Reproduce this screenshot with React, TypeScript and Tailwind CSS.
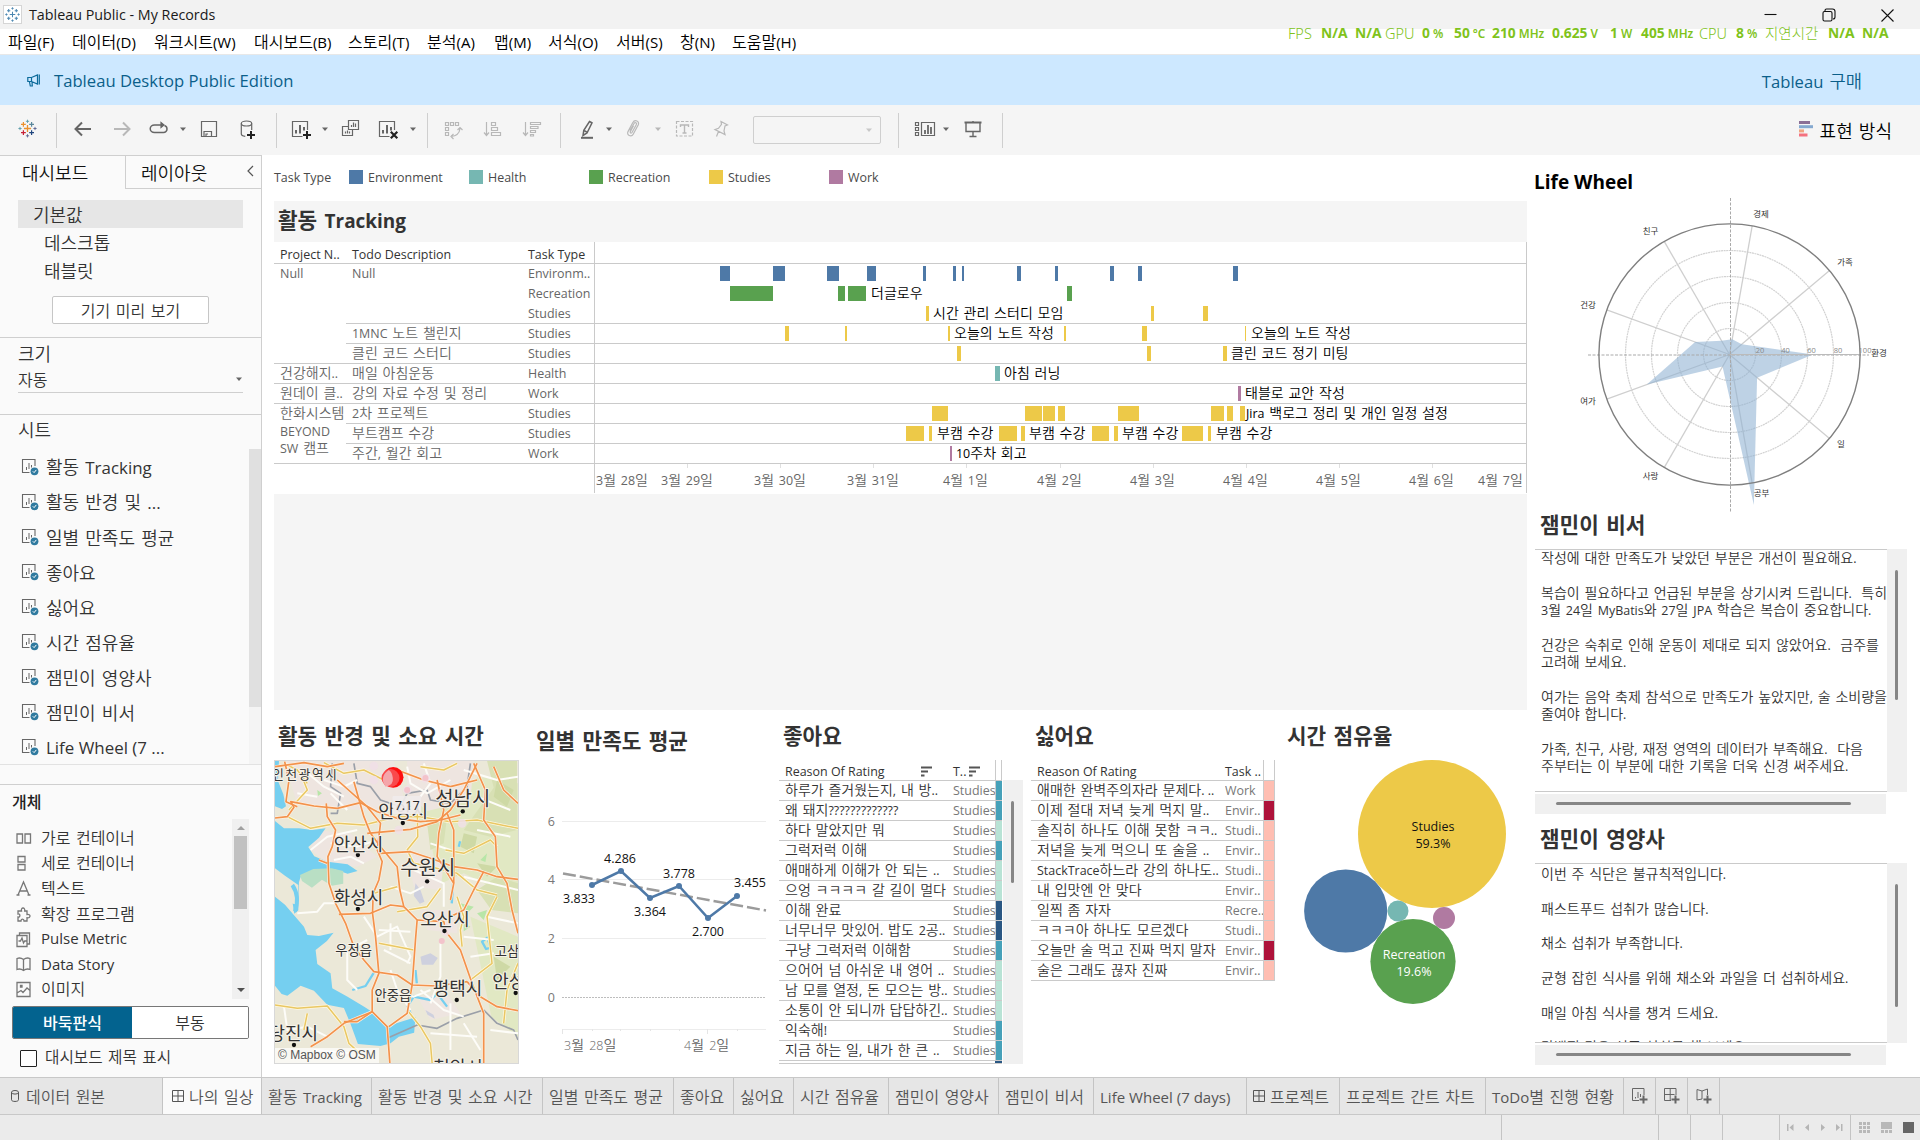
import React from 'react';

const HANGUL = '[font-family:"Noto_Sans_CJK_KR",sans-serif]';
const LATIN = '[font-family:"Open_Sans","Noto_Sans",sans-serif] ';

/* Mixed-script text: Hangul runs at full size, Latin runs slightly smaller. */
function K({ t, c = '', big, b }: { t: string; c?: string; big?: boolean; b?: boolean }) {
  const runs = t.match(/[\u1100-\u11ff\u3130-\u318f\uac00-\ud7a3\s]+|[^\u1100-\u11ff\u3130-\u318f\uac00-\ud7a3\s]+(?:\s+[^\u1100-\u11ff\u3130-\u318f\uac00-\ud7a3\s]+)*/g) || [];
  return (
    <span className={'whitespace-pre ' + HANGUL + ' ' + c}>
      {runs.map((r, i) =>
        /[\u1100-\u11ff\u3130-\u318f\uac00-\ud7a3]/.test(r) || !r.trim() ? (
          <span key={i} className={'[word-spacing:0.12em] ' + (b ? '' : 'font-[350]')}>{r}</span>
        ) : (
          <span key={i} className={LATIN + (big ? 'text-[0.94em]' : 'text-[0.89em]')}>{r}</span>
        ),
      )}
    </span>
  );
}

const BLUE = '#4e79a7';
const TEAL = '#76b7b2';
const GREEN = '#59a14f';
const YELLOW = '#edc948';
const PURPLE = '#b07aa1';

/* ---------- toolbar ---------- */

function Ic({ m, color = '#666', children }: { m: string; color?: string; children: React.ReactNode }) {
  return (
    <svg className={'h-[22px] w-[22px] shrink-0 ' + m} viewBox="0 0 22 22" fill="none" stroke={color} strokeWidth="1.2">
      {children}
    </svg>
  );
}
const Caret = ({ m, color = '#666' }: { m: string; color?: string }) => (
  <svg className={'h-[4px] w-[6px] shrink-0 ' + m} viewBox="0 0 6 4" fill={color}><path d="M0 0.5h6L3 4z" /></svg>
);
const Div = ({ m }: { m: string }) => <div className={'h-[35px] w-px shrink-0 bg-[#cfcfcf] ' + m} />;

const plus = (x: number, y: number, r: number) => `M${x - r} ${y}h${2 * r}M${x} ${y - r}v${2 * r}`;

function TableauMark() {
  return (
    <>
      <path d={plus(10.5, 10.5, 3.6)} stroke="#eb912c" strokeWidth="1.3" />
      <path d={plus(6.4, 6.4, 2.4)} stroke="#eb912c" strokeWidth="1.2" />
      <path d={plus(14.6, 6.4, 2.4)} stroke="#59879b" strokeWidth="1.2" />
      <path d={plus(6.4, 14.6, 2.4)} stroke="#c72035" strokeWidth="1.2" />
      <path d={plus(14.6, 14.6, 2.4)} stroke="#1f457e" strokeWidth="1.2" />
      <path d={plus(10.5, 3.3, 1.6) + plus(3, 10.5, 1.6)} stroke="#5b9ba8" strokeWidth="0.9" />
      <path d={plus(18, 10.5, 1.6) + plus(10.5, 17.8, 1.6)} stroke="#5b6591" strokeWidth="0.9" />
    </>
  );
}

function Toolbar() {
  const g = '#b8b8b8';
  return (
    <div className="flex h-[50px] shrink-0 items-center bg-[#f5f5f5] pb-[2px]">
      <Ic m="ml-[17px]"><TableauMark /></Ic>
      <Div m="ml-[17px] mt-[2px]" />
      <Ic m="ml-[15px]"><path d="M19 11H4M10 4.5L3.5 11l6.500 6.500" strokeWidth="2" /></Ic>
      <Ic m="ml-[17px]" color={g}><path d="M3 11h15M12 4.500L18.500 11 12 17.500" strokeWidth="2" /></Ic>
      <Ic m="ml-[15px]"><path d="M14 7H6.500a4 3.500 0 0 0 0 7.500h9a3.500 3.500 0 0 0 3.500-3.500c0-2-1-3-2.500-3.500" strokeWidth="1.500" /><path d="M13 4.500v5l3-2.500z" fill="#666" /></Ic>
      <Caret m="ml-[10px]" />
      <Ic m="ml-[12px]"><path d="M3.500 3.500h15v15h-15zM6 18.500v-5h7.500v5M8 18.500V16h2" /></Ic>
      <Ic m="ml-[17px]"><ellipse cx="9.500" cy="5.500" rx="5.200" ry="2.500" /><path d="M4.300 5.500v10.500c0 1.200 1.500 2 4 2.300M14.700 5.500v6.500" /><path d={plus(14, 17, 4)} stroke="#222" strokeWidth="2" /></Ic>
      <Div m="ml-[17px] mt-[2px]" />
      <Ic m="ml-[14px]"><path d="M16.500 12V3.500h-15v15h10" /><path d="M5 12v3.500M9 7v8.500M13 9v3.500" strokeWidth="2" /><path d={plus(16, 17, 4)} stroke="#222" strokeWidth="2" /></Ic>
      <Caret m="ml-[9px]" />
      <Ic m="ml-[11px]"><path d="M9.500 2.500h10v9h-10zM9.500 8.500h-6v9h10v-6M12.500 9V7M14.500 9V4.500M16.500 9V5.500M6.500 15.500v-2M8.500 15.500v-3M10.500 15.500v-2" /></Ic>
      <Ic m="ml-[17px]"><path d="M16.500 12V3.500h-15v15h10" /><path d="M5 12v3.500M9 7v8.500M13 9v3.500" strokeWidth="2" /><path d="M12.800 13.800l6.500 6.500M19.300 13.800l-6.500 6.500" stroke="#222" strokeWidth="2.200" /></Ic>
      <Caret m="ml-[10px]" />
      <Div m="ml-[11px] mt-[2px]" />
      <Ic m="ml-[14px]" color={g}><path d="M3.500 4.500h3v3h-3zM8.500 4.500h3v3h-3zM13.500 4.500h3v3h-3zM3.500 9.500h3v3h-3zM3.500 14.500h3v3h-3zM9 18.500c5.500-.5 8.500-3.500 9-8M11.500 16L9 18.500l2.500 2.500M15.500 12L18 9.500l2.500 2.500" /></Ic>
      <Ic m="ml-[17px]" color={g}><path d="M5.500 4v13M3 14.500L5.500 17.500 8 14.500M10.500 4.500h4v3h-4zM10.500 9.500h6v3h-6zM10.500 14.500h9v3h-9z" /></Ic>
      <Ic m="ml-[18px]" color={g}><path d="M4.500 4v13M2 14.500l2.500 3 2.500-3M9.500 4.500h10v2h-10zM9.500 8.500h7.500v2H9.500zM9.500 12.500h5v2h-5zM9.500 16.500h3v1.500h-3z" /></Ic>
      <Div m="ml-[17px] mt-[2px]" />
      <Ic m="ml-[15px]"><path d="M13.500 3.500l2.500 1.300-5 10.200-4 2.500.8-5.200zM8 12.500l3 1.700" strokeWidth="1.500" /><path d="M5 19.800h12" strokeWidth="2" /></Ic>
      <Caret m="ml-[8px]" />
      <Ic m="ml-[10px]" color={g}><path d="M8 12.500l4.200-7.300c.8-1.300 3-.3 2.200 1.300L10 14.500c-.6 1-2.300.3-1.700-.9l3.200-5.800M14.800 9.500l-3.600 6.700c-1.800 3.200-7 1-5.200-2.600l4.700-8.800C12.800 1 18 3 16.200 7z" /></Ic>
      <Caret m="ml-[11px]" color={g} />
      <Ic m="ml-[13px]" color={g}><rect x="2.500" y="3.500" width="16" height="14.500" strokeDasharray="3 1.500" /><path d="M6.500 9V7h8v2M10.500 7v8M8.500 15h4" strokeWidth="1.400" /></Ic>
      <Ic m="ml-[14px]" color={g}><path d="M11 3.500l6.500 3.500-2.500 1-1 5 1 3.500-10-5 3.500-1.200 3-4zM8.500 13.500l-2 5" /></Ic>
      <div className="ml-[21px] mt-[2px] flex h-[28px] w-[128px] items-center justify-end rounded-[2px] border border-[#cfcfcf] pr-[8px]"><Caret m="" color="#c8c8c8" /></div>
      <Div m="ml-[17px] mt-[2px]" />
      <Ic m="ml-[15px]"><path d="M1.500 4.500h3v3h-3zM1.500 9.500h3v3h-3zM1.500 14.500h3v3h-3zM7.500 4.500h13v13h-13z" /><path d="M11 16v-4M14 16V7M17 16V9" strokeWidth="1.800" /></Ic>
      <Caret m="ml-[7px]" />
      <Ic m="ml-[13px]"><path d="M2.500 4.500h17" strokeWidth="2" /><path d="M4 5v8.500h14V5M11 13.500v4.500M7.500 18.500h7M11 3v1" strokeWidth="1.400" /></Ic>
      <Div m="ml-[18px] mt-[2px]" />
      <div className="flex-1" />
      <svg className="mr-[7px] h-[16px] w-[14px]" viewBox="0 0 14 16"><path d="M0 0h11v3H0z" fill="#8b6f96" /><path d="M0 4.200h14v3H0z" fill="#85a9d0" /><path d="M0 8.400h5v3H0z" fill="#f0a580" /><path d="M0 12.500h8.500v3H0z" fill="#f4717f" /></svg>
      <K t="표현 방식" c="mr-[28px] mt-[2px] text-[18px] text-black" />
    </div>
  );
}

/* ---------- header ---------- */

const menus: [string, string][] = [
  ['파일(F)', 'w-[64px]'], ['데이터(D)', 'w-[82px]'], ['워크시트(W)', 'w-[100px]'], ['대시보드(B)', 'w-[94px]'], ['스토리(T)', 'w-[79px]'],
  ['분석(A)', 'w-[67px]'], ['맵(M)', 'w-[54px]'], ['서식(O)', 'w-[68px]'], ['서버(S)', 'w-[64px]'], ['창(N)', 'w-[52px]'], ['도움말(H)', 'w-[80px]'],
];

const stats: [string, string, string][] = [
  ['FPS', '', 'w-[33px]'], ['', 'N/A', 'w-[34px]'], ['', 'N/A', 'w-[30px]'], ['GPU', '', 'w-[37px]'], ['%', '0', 'w-[32px]'], ['°C', '50', 'w-[38px]'],
  ['MHz', '210', 'w-[60px]'], ['V', '0.625', 'w-[58px]'], ['W', '1', 'w-[31px]'], ['MHz', '405', 'w-[58px]'], ['CPU', '', 'w-[37px]'], ['%', '8', 'w-[29px]'],
  ['지연시간', '', 'w-[63px]'], ['', 'N/A', 'w-[34px]'], ['', 'N/A', 'w-[34px]'],
];

function Header() {
  return (
    <header className="relative shrink-0">
      <div className="flex h-[29px] items-center bg-[#f2f2f2]">
        <svg className="ml-[3px] h-[19px] w-[19px] border border-[#d5d5d5] bg-white" viewBox="0 0 21 21" fill="none">
          <path d={plus(10.5, 10.5, 3.4) + plus(5.800, 5.800, 2) + plus(15.200, 5.800, 2) + plus(5.800, 15.200, 2) + plus(15.200, 15.200, 2)} stroke="#4a86b0" strokeWidth="1.3" />
          <path d={plus(10.5, 3, 1.5) + plus(3, 10.5, 1.5) + plus(18, 10.5, 1.5) + plus(10.5, 18, 1.5)} stroke="#4a86b0" />
        </svg>
        <span className={'ml-[7px] text-[14.300px] text-[#1a1a1a] [font-family:"Open_Sans"]'}>Tableau Public - My Records</span>
        <div className="flex-1" />
        <svg className="mr-[26px] h-[14px] w-[131px]" viewBox="0 0 131 14" fill="none" stroke="#111" strokeWidth="1.1">
          <path d="M1.500 6.500h12" /><rect x="60" y="3.500" width="9" height="9.500" rx="1.500" /><path d="M62 3.500V2.500c0-1 .5-1.500 1.500-1.500h6c1.500 0 2.500 1 2.500 2.500v5.500c0 1-.5 2-2 2" /><path d="M118.500 1.500l12 12M130.500 1.500l-12 12" />
        </svg>
      </div>
      <div className="flex h-[26px] items-center border-b border-[#e8e8e8] bg-white pl-[8px] text-[16px] leading-[26px] text-black">
        {menus.map(([m, w]) => <div key={m} className={w}><K t={m} big /></div>)}
      </div>
      <div className="absolute left-[1288px] top-[22px] flex h-[22px] items-center text-[#7fc31c]">
        {stats.map(([u, v, w], i) => (
          <div key={i} className={'flex items-baseline gap-[3px] whitespace-nowrap leading-[22px] [font-family:"Noto_Sans","Noto_Sans_CJK_KR"] ' + w}>
            {v && <b className="text-[13.800px]">{v}</b>}
            {u && (v ? <b className="text-[11.800px] font-semibold">{u}</b> : <span className="text-[14.500px] font-light">{u}</span>)}
          </div>
        ))}
      </div>
      <div className="flex h-[50px] items-center bg-[#cde8ff] pt-[2px] text-[#0b5f8a]">
        <svg className="mb-[2px] ml-[27px] h-[13px] w-[13px]" viewBox="0 0 13 13" fill="none" stroke="#0b6a9a" strokeWidth="1.2"><path d="M.8 3.500h3.700l6-2.500v9l-6-2.500H.8zM2.500 8l.8 4h2L5 8M4.500 3.500v4M12.300.5v10" /></svg>
        <span className={'ml-[14px] text-[16.650px] font-medium [font-family:"Open_Sans"]'}>Tableau Desktop Public Edition</span>
        <div className="flex-1" />
        <K t="Tableau 구매" big c="mr-[58px] text-[17.700px] font-medium" />
      </div>
    </header>
  );
}

/* ---------- left panel ---------- */

const sheets = ['활동 Tracking', '활동 반경 및 ...', '일별 만족도 평균', '좋아요', '싫어요', '시간 점유율', '잼민이 영양사', '잼민이 비서', 'Life Wheel (7 ...'];

const objects: [string, string][] = [
  ['가로 컨테이너', 'M1 4h5.500v9H1zM9 4h5.500v9H9z'],
  ['세로 컨테이너', 'M2 1.500h7v5.500H2zM2 9.500h7V15H2z'],
  ['텍스트', 'M2 15L7.500 2 13 15M4 11h7M.5 15h3M11.500 15h3'],
  ['확장 프로그램', 'M2 5h3.500c-1-4 4-4 3.200 0H11v3.500c4-.8 4 4 0 3.200V15H8c0-2.500-3-2.500-3 0H2v-4c2.500.5 2.500-3.500 0-3z'],
  ['Pulse Metric', 'M1 4.500h10v11H1zM3.500 4V2h10v11H11M2.500 10h2l1.500-3 1.500 5 1.200-2H11'],
  ['Data Story', 'M1 2.500c2.500-1 4.500-.5 6.500 1 2-1.500 4-2 6.500-1v11c-2.500-1-4.500-.5-6.500 1-2-1.500-4-2-6.500-1zM7.500 3.500v11'],
  ['이미지', 'M1 1.500h13v14H1zM1 12l4-2.500 2 2 4-4.500 3 2.500M4.500 4.500h1.500v1.500H4.500z'],
];

function Side() {
  return (
    <aside className="flex w-[262px] shrink-0 flex-col border-r border-t border-[#cfcfcf] bg-[#fafafa] text-[#333]">
      <div className="flex h-[33px] text-[18px] leading-[33px] text-[#111]">
        <div className="w-[125px] pl-[22px]"><K t="대시보드" /></div>
        <div className="flex flex-1 border-b border-l border-[#cfcfcf] pl-[15px]">
          <K t="레이아웃" />
          <svg className="ml-auto mr-[7px] mt-[9px] h-[12px] w-[7px]" viewBox="0 0 7 12" fill="none" stroke="#555" strokeWidth="1.2"><path d="M6 1L1 6l5 5" /></svg>
        </div>
      </div>
      <div className="ml-[18px] mt-[11px] h-[28px] w-[225px] bg-[#e6e6e6] pl-[15px] text-[18px] leading-[29px]"><K t="기본값" /></div>
      <div className="h-[29px] pl-[44px] text-[18px] leading-[29px]"><K t="데스크톱" /></div>
      <div className="h-[29px] pl-[44px] text-[18px] leading-[27px]"><K t="태블릿" /></div>
      <div className="ml-[52px] mt-[10px] flex h-[28px] w-[157px] items-center justify-center rounded-[2px] border border-[#c6c6c6] bg-white pb-px text-[16px]"><K t="기기 미리 보기" /></div>
      <div className="mt-[13px] h-[77px] border-t border-[#cfcfcf]">
        <div className="h-[31px] pl-[18px] text-[18px] leading-[30px]"><K t="크기" /></div>
        <div className="ml-[18px] flex h-[24px] w-[225px] items-center border-b border-[#cfcfcf] text-[16px] leading-[17px]">
          <K t="자동" c="-mt-[3px] flex-1" /><Caret m="-mt-[3px] mr-px" />
        </div>
      </div>
      <div className="flex h-[370px] flex-col border-t border-[#cfcfcf]">
        <div className="h-[34px] pl-[18px] text-[18px] leading-[29px]"><K t="시트" /></div>
        <div className="flex h-[316px] border-b border-[#e2e2e2]">
          <div className="flex-1">
            {sheets.map((s) => (
              <div key={s} className="flex h-[35px] items-center pl-[21px] pt-px text-[18px] leading-[34px]">
                <svg className="mr-[7px] h-[18px] w-[18px]" viewBox="0 0 18 18" fill="none">
                  <path d="M14 8V1.500H1.500v13h7" stroke="#666" strokeWidth="1.1" /><path d="M5.500 9v3M8 5v6M10.500 7v2.500" stroke="#666" />
                  <circle cx="13.500" cy="13.300" r="3.900" fill="#2f7a9f" /><path d="M11.800 13.300l1.300 1.300 2.200-2.700" stroke="#fff" />
                </svg>
                <K t={s} big />
              </div>
            ))}
          </div>
          <div className="w-[12px] bg-[#f4f4f4]"><div className="h-[258px] bg-[#e0e0e0]" /></div>
        </div>
      </div>
      <div className="flex flex-1 flex-col border-t border-[#cfcfcf]">
        <div className="h-[34px] pl-[12px] text-[16px] font-medium leading-[33px] text-[#222]"><K t="개체" b /></div>
        <div className="ml-[12px] flex h-[180px] w-[237px]">
          <div className="flex-1 pt-[6px]">
            {objects.map(([t, d]) => (
              <div key={t} className="flex h-[25.200px] items-center pl-[4px] text-[16px] leading-[24px]">
                <svg className="mr-[9px] mt-[2px] h-[17px] w-[16px]" viewBox="0 0 16 17" fill="none" stroke="#777" strokeWidth="1.300"><path d={d} /></svg>
                <K t={t} big c="-mt-px" />
              </div>
            ))}
          </div>
          <div className="flex w-[17px] flex-col items-center bg-[#f0f0f0]">
            <svg className="mt-[7px] h-[4px] w-[8px]" viewBox="0 0 8 4" fill="#a0a0a0"><path d="M4 0l4 4H0z" /></svg>
            <div className="mt-[6px] h-[73px] w-[13px] bg-[#c1c1c1]" />
            <svg className="mb-[7px] mt-auto h-[4px] w-[8px]" viewBox="0 0 8 4" fill="#505050"><path d="M0 0h8L4 4z" /></svg>
          </div>
        </div>
        <div className="ml-[12px] mt-[7px] flex h-[33px] w-[237px] overflow-hidden rounded-[2px] border border-[#777] text-[16px] leading-[30px]">
          <div className="-m-px w-[121px] bg-[#03638f] pt-px text-center font-medium text-white"><K t="바둑판식" b /></div>
          <div className="flex-1 bg-white text-center"><K t="부동" /></div>
        </div>
        <div className="mt-[8px] flex h-[22px] items-center pl-[20px] text-[15.700px] leading-[20px]">
          <div className="mr-[8px] h-[17px] w-[17px] rounded-[1px] border border-[#222] bg-white" />
          <K t="대시보드 제목 표시" c="-mt-[2px]" />
        </div>
      </div>
    </aside>
  );
}

/* ---------- gantt ---------- */

type Bar = [number, number];
type Row = { p?: string; d?: string; k: string; c: string; bars: Bar[]; labels?: [number, string][]; line: 'full' | 'part' | 'none' };

const rows: Row[] = [
  { p: 'Null', d: 'Null', k: 'Environm..', c: BLUE, bars: [[720, 730], [773, 785], [827, 839], [867, 876], [923, 926], [953, 956], [962, 964], [1017, 1021], [1055, 1058], [1110, 1114], [1138, 1142], [1233, 1238]], line: 'none' },
  { k: 'Recreation', c: GREEN, bars: [[730, 773], [838, 845], [848, 866], [1067, 1072]], labels: [[871, '더글로우']], line: 'none' },
  { k: 'Studies', c: YELLOW, bars: [[926, 929], [1151, 1154], [1203, 1208]], labels: [[933, '시간 관리 스터디 모임']], line: 'part' },
  { d: '1MNC 노트 챌린지', k: 'Studies', c: YELLOW, bars: [[785, 789], [845, 847], [948, 950], [1064, 1066], [1142, 1147], [1245, 1246]], labels: [[954, '오늘의 노트 작성'], [1251, '오늘의 노트 작성']], line: 'part' },
  { d: '클린 코드 스터디', k: 'Studies', c: YELLOW, bars: [[957, 961], [1147, 1151], [1223, 1227]], labels: [[1231, '클린 코드 정기 미팅']], line: 'full' },
  { p: '건강해지..', d: '매일 아침운동', k: 'Health', c: TEAL, bars: [[995, 1000]], labels: [[1004, '아침 러닝']], line: 'full' },
  { p: '원데이 클..', d: '강의 자료 수정 및 정리', k: 'Work', c: PURPLE, bars: [[1238, 1241]], labels: [[1245, '태블로 교안 작성']], line: 'full' },
  { p: '한화시스템', d: '2차 프로젝트', k: 'Studies', c: YELLOW, bars: [[932, 948], [1025, 1042], [1043, 1055], [1058, 1065], [1118, 1139], [1211, 1224], [1227, 1233], [1240, 1245]], labels: [[1246, 'Jira 백로그 정리 및 개인 일정 설정']], line: 'part' },
  { p: 'BEYOND', d: '부트캠프 수강', k: 'Studies', c: YELLOW, bars: [[906, 924], [929, 932], [999, 1017], [1021, 1025], [1092, 1109], [1114, 1118], [1182, 1203], [1208, 1211]], labels: [[937, '부캠 수강'], [1029, '부캠 수강'], [1122, '부캠 수강'], [1216, '부캠 수강']], line: 'part' },
  { p: 'SW 캠프', d: '주간, 월간 회고', k: 'Work', c: PURPLE, bars: [[950, 952]], labels: [[956, '10주차 회고']], line: 'full' },
];

const dates: [number, string][] = [[596, '3월 28일'], [661, '3월 29일'], [754, '3월 30일'], [847, '3월 31일'], [943, '4월 1일'], [1037, '4월 2일'], [1130, '4월 3일'], [1223, '4월 4일'], [1316, '4월 5일'], [1409, '4월 6일'], [1478, '4월 7일']];
const ticks = [687, 780, 873, 966, 1060, 1153, 1246, 1339, 1432];

function Gantt() {
  return (
    <section className="h-[509px] bg-[#f5f5f5]">
      <div className="h-[41px] pl-[4px] text-[21.300px] font-bold leading-[36px] text-[#333]"><K t="활동 Tracking" b /></div>
      <div className="h-[252px] bg-white text-[14px]">
        <div className="flex h-[22px] border-b border-[#cacaca] leading-[22px] text-[#333]">
          <div className="w-[72px] pl-[6px]"><K t="Project N.." /></div>
          <div className="w-[176px] pl-[6px]"><K t="Todo Description" /></div>
          <div className="w-[72px] pl-[6px]"><K t="Task Type" /></div>
          <div className="flex-1 border-x border-[#cacaca]" />
        </div>
        {rows.map((r, i) => (
          <div key={i} className="flex h-[20px] leading-[17px] text-[#666]">
            <div className={'w-[72px] whitespace-nowrap pl-[6px] ' + (r.line === 'full' ? 'border-b border-[#cacaca] ' : '') + (i === 8 ? 'leading-[12px]' : i === 9 ? 'leading-[7px]' : '')}>{r.p && <K t={r.p} />}</div>
            <div className={'w-[176px] pl-[6px] ' + (r.line !== 'none' ? 'border-b border-[#cacaca]' : '')}>{r.d && <K t={r.d} />}</div>
            <div className={'w-[72px] pl-[6px] ' + (r.line !== 'none' ? 'border-b border-[#cacaca]' : '')}><K t={r.k} /></div>
            <div className={'relative flex-1 border-x border-[#cacaca] ' + (r.line !== 'none' ? 'border-b' : '')}>
              {r.bars.map(([a, b]) => <div key={a} className="absolute top-[2px] h-[15px]" style={{ left: a - 595, width: b - a, background: r.c }} />)}
              {r.labels?.map(([x, t]) => <div key={x} className="absolute top-0 text-black" style={{ left: x - 595 }}><K t={t} /></div>)}
            </div>
          </div>
        ))}
        <div className="flex h-[29px]">
          <div className="w-[320px]" />
          <div className="relative flex-1 border-x border-[#cacaca] text-[#666]">
            {ticks.map((x) => <div key={x} className="absolute top-0 h-[4px] w-px bg-[#e0e0e0]" style={{ left: x - 595 }} />)}
            {dates.map(([x, t]) => <div key={x} className="absolute top-[5px] leading-[20px]" style={{ left: x - 595 }}><K t={t} /></div>)}
          </div>
        </div>
      </div>
    </section>
  );
}

/* ---------- map ---------- */

const orange = [
  'M33 204L70 200 90 172 80 155 150 168 220 175 290 158 340 185 400 205 470 215 530 210 590 195',
  'M62 35L75 90 66 155 100 170', 'M33 50L120 38 190 50 240 40',
  'M187 160L190 200 215 240 205 290 192 320 195 400 215 460 245 520 270 590 300 630 330 665 400 675 445 705 520 708 610 695',
  'M220 90L310 170 350 220 340 300 355 335 345 390 328 430 326 490 335 560 345 670 325 720 325 785 370 830 378 939',
  'M270 95L300 200 320 250 350 290 400 350 408 420 420 470 460 510 455 570 445 705',
  'M310 250L440 238 520 215 560 180 600 120 640 40', 'M350 310L440 305 500 325 570 350 640 360 700 380 763 388',
  'M550 190L570 240 570 400 560 450', 'M460 510L540 515 550 550 590 600 625 700 660 790 660 939',
  'M520 90L540 180 525 250 520 320 570 400', 'M630 40L665 120 660 210 695 260 700 350 730 400 745 480 763 550',
  'M225 493L320 490 380 465 420 470', 'M325 785L240 820 190 860 140 890', 'M375 830L430 790 445 705',
  'M610 695L650 740 700 770 763 782', 'M690 50L720 120 763 160', 'M560 500L600 480 630 420 660 365', 'M165 330L190 340',
  'M240 815L280 815 325 785', 'M400 60L480 90 560 110 640 90',
];
const yellow = [
  'M70 200L140 235 220 220 300 225 400 200 470 200 560 215 640 210 763 235', 'M33 765L100 775 190 768 240 830 255 880 310 930',
  'M460 170L462 260 430 300 450 340 500 350 580 370 640 420 700 435', 'M530 415L490 470 400 485',
  'M545 300L600 310 680 270 700 290', 'M580 440L600 500 590 540 595 590', 'M345 580L400 590 450 600', 'M430 780L470 830 500 880 505 939',
  'M700 440L670 500 685 640 620 690', 'M360 90L300 60 240 70 180 38', 'M720 820L730 720 763 640', 'M130 100L100 60 60 40',
  'M330 430L400 410', 'M75 180L130 120 110 70', 'M130 790L120 840', 'M470 50L540 60 580 40',
];
const white = [
  'M100 490L160 485 180 460 215 460', 'M300 500L340 560 400 530 440 620 430 640', 'M345 540L440 545', 'M380 520L380 600', 'M360 600L440 640',
  'M60 770L70 840 130 830 190 860', 'M400 730L450 740 500 720', 'M530 580L530 680 500 760', 'M250 600L250 690 280 720', 'M255 600L310 570',
  'M380 660L400 720 440 780', 'M560 760L560 900', 'M470 720L540 780 600 800', 'M600 560L690 570', 'M620 620L690 610', 'M200 280L280 290 340 270',
  'M210 330L260 320 300 340', 'M430 50L440 100 490 130 560 90', 'M480 40L500 100 470 140', 'M500 280L560 300', 'M640 240L740 260', 'M600 820L650 900',
  'M450 360L540 400 540 470', 'M600 380L680 400 763 420', 'M380 410L440 430 480 410', 'M180 90L240 110 280 90', 'M120 60L180 110 240 140',
  'M100 130L160 140', 'M200 130L250 180', 'M600 60L700 90 763 80', 'M640 140L740 180', 'M670 500L763 520', 'M150 900L260 910', 'M500 850L640 860', 'M680 840L763 850', 'M140 300L190 260 280 240',
];

const cities: [number, number, string, number][] = [
  [597, 167, '성남시', 60], [418, 205, '안양시', 54], [284, 302, '안산시', 54], [492, 375, '수원시', 60], [284, 463, '화성시', 54], [544, 529, '오산시', 54],
  [269, 616, '우정읍', 40], [387, 749, '안중읍', 40], [581, 736, '평택시', 54], [735, 714, '안성', 54], [88, 871, '당진시', 54], [730, 618, '고삼', 40], [583, 972, '천안시', 54],
];
const cityDots = [[597, 184], [417, 219], [282, 315], [490, 394], [282, 477], [542, 543], [579, 750], [90, 885], [756, 729]];

function SiteMap() {
  const stroke = (ds: string[], c: string, w: number) => ds.map((d, i) => <path key={c + i} d={d} stroke={c} strokeWidth={w} />);
  return (
    <div className="relative h-[304px] w-[245px] border border-[#d8d8d8]">
      <svg className="block h-full w-full" viewBox="33 33 730 906" preserveAspectRatio="none" fill="none" strokeLinejoin="round">
        <rect x="33" y="33" width="730" height="906" fill="#ebe8d8" />
        <path d="M400 180l90 40 20 100-60 60 60 30 90-40 120 60 43-20V100l-120-20-60 60zM620 500l143 60v300l-80-60z" fill="#e1e8c3" />
        <path d="M600 240l80 20 80-20V33h-90l20 80zM640 420l60-40 63 20v90l-80-10zM490 220l60-20-10 80-40 20z" fill="#d8e0b4" />
        <path d="M60 33h330l30 110-80 40-140-10-100-10zM430 33h200l-10 120-130 30-60-50z" fill="#eee5e0" />
        <path d="M150 240l110 10 80 70-60 30-90-10-50-40zM430 310l110 30-10 80-80-10zM470 480l110 0 0 70-90-10zM460 740l90-10 40 60-90 20z" fill="#eee5e0" />
        <path d="M700 90l50 30-20 50-40-30zM600 250l40 10-10 50-40-20zM640 340l60 10-30 30zM690 620l50 30-40 40z" fill="#ced9a5" />
        <path d="M590 460l40 10-20 20zM600 520l20 10-20 14zM650 330l20-20-5 26zM640 490l30-10-10 30zM160 120l14 10-12 8z" fill="#b8e6a8" />
        <path d="M33 33h12l-3 60 16 40 8 36-12 8-21-8zM33 213l27 22h45l40 5 40-5-20 28-32 28 18 28 40 16 60 8 30 20-30 8-42-14-48 4-50 16-6 20-2 84-12 10-8-50-30-12-30 4z" fill="#75cff0" />
        <path d="M33 355l30 22 40 28 0 60-60-14-10 10z" fill="#ebe8d8" />
        <path d="M33 440l30 24 22 26 35 40 10 25 35 3 44-10-20 25-34 27 5 42 40 28 5 45 46 25 50 30 30 20 40 38 84-26-4 46-46 12-25 20-30 8-68-6-22-60-20-48-50-10-40-42-40-15-40 30-17-5-20-25z" fill="#75cff0" />
        <path d="M85 405c14 20 18 50 8 80" stroke="#75cff0" strokeWidth="12" />
        <path d="M108 375l40-18 55-2 35 8v38l-34 6-30-18-30 24-30-20z" fill="#b9dfc4" />
        <path d="M430 770l20-30 50 10 20-20 30 40M440 740l-8 30 8 20M455 660l4 40M265 720l40-12 25-40M568 400l-4 60M585 290l4-16M655 575l16-12 10 30-14 4z" stroke="#75cff0" strokeWidth="7" />
        <path d="M455 400l15 20 12 35-14 6-18-24zM470 620l30-10 22 14-14 20h-34zM485 780l24 14 4 12-22-12z" fill="#ced0de" />
        <path d="M270 40l10 60 40 10 30 40 60 20 20-40 60-10 10 30 60 10 50-50 10-70M205 40l-5 70 30 20-10 60-20 0M370 865l90-40 60 10 60-30 80-25 40 40 50 20 13 30" stroke="#9a9fa8" strokeWidth="5" />
        {stroke(white, '#fdfcf8', 6)}
        {stroke(yellow, '#fff8e0', 9)}
        {stroke(yellow, '#e9c763', 4.5)}
        {stroke(orange, '#fdf0e2', 9)}
        {stroke(orange, '#f3924b', 5)}
        {[[330, 90], [430, 120], [485, 85], [595, 220], [545, 545], [405, 240], [330, 48], [555, 528]].map(([x, y], i) => <circle key={i} cx={x} cy={y} r="13" fill="#f0dfe6" opacity="0.85" />)}
        {[[430, 120], [485, 84], [534, 573]].map(([x, y], i) => <circle key={i} cx={x} cy={y} r="9" fill="#f3c3cb" />)}
        {cityDots.map(([x, y], i) => <circle key={i} cx={x} cy={y} r="6.500" fill="#111" />)}
        <g className={HANGUL} fill="#333" stroke="#f6f2e8" strokeWidth="6" paintOrder="stroke" textAnchor="middle">
          {cities.map(([x, y, t, s]) => <text key={t} x={x} y={y} fontSize={s}>{t}</text>)}
          <text x="224" y="86" fontSize="38" textAnchor="end" letterSpacing="5">인천광역시</text>
        </g>
        <circle cx="388" cy="82" r="31" fill="#fe0e0e" />
        <circle cx="380" cy="84" r="27" fill="#f9494c" />
        <path d="M375 60q-30 20-10 50 25-4 22-26-2-18-12-24z" fill="#f4a6ab" />
        <rect x="386" y="138" width="86" height="54" rx="4" fill="#f0ecec" opacity="0.92" />
        <text x="430" y="181" fontSize="38" fill="#222" textAnchor="middle" className={'[font-family:"Open_Sans"]'}>7.17</text>
      </svg>
      <div className={'absolute bottom-0 left-0 bg-white/70 px-[3px] text-[12px] leading-[15px] text-[#555] [font-family:"Liberation_Sans"]'}>© Mapbox © OSM</div>
    </div>
  );
}

/* ---------- line chart ---------- */

const pts: [number, number][] = [[592, 885], [621, 871], [650, 898], [679, 886], [708, 918], [737, 896]];
const vals: [number, number, string][] = [[579, 903, '3.833'], [620, 863, '4.286'], [650, 916, '3.364'], [679, 878, '3.778'], [750, 887, '3.455'], [708, 936, '2.700']];

function LineChart() {
  return (
    <svg className="block h-[304px] w-[243px]" viewBox="530 760 243 304" fill="none">
      {[821.5, 879.5, 938.5, 1029.5].map((y) => <path key={y} d={`M562 ${y}h204`} stroke="#ececec" />)}
      <path d="M562 997.500h204" stroke="#bdbdbd" strokeDasharray="2 1" />
      <path d="M562.500 1029v5M592.500 1029v2M620.500 1029v2M650.500 1029v2M679.500 1029v2M707.500 1029v5M737.500 1029v2" stroke="#e5e5e5" />
      <path d="M563 873.500L766 910.500" stroke="#9b9b9b" strokeWidth="2.500" strokeDasharray="13 4" />
      <polyline points={pts.map((p) => p.join(',')).join(' ')} stroke={BLUE} strokeWidth="2.500" />
      {pts.map(([x, y]) => <circle key={x} cx={x} cy={y} r="3" fill={BLUE} />)}
      <g fontSize="12.500" className={'[font-family:"Open_Sans"]'}>
        {vals.map(([x, y, t]) => <text key={t} x={x} y={y} textAnchor="middle" fill="#111">{t}</text>)}
        {[[6, 826], [4, 884], [2, 943], [0, 1002]].map(([v, y]) => <text key={v} x="555" y={y} textAnchor="end" fill="#777">{v}</text>)}
      </g>
      <g fontSize="14" fill="#666" className={'font-[350] [word-spacing:2px] ' + HANGUL}>
        <text x="564" y="1050">
          <tspan fontSize="12.500" className={'[font-family:"Open_Sans"]'}>3</tspan>월 <tspan fontSize="12.500" className={'[font-family:"Open_Sans"]'}>28</tspan>일
        </text>
        <text x="684" y="1050">
          <tspan fontSize="12.500" className={'[font-family:"Open_Sans"]'}>4</tspan>월 <tspan fontSize="12.500" className={'[font-family:"Open_Sans"]'}>2</tspan>일
        </text>
      </g>
    </svg>
  );
}

/* ---------- rating tables ---------- */

const C1 = '#46a1b9';
const C2 = '#b8e3d5';
const C3 = '#2a5783';
const likes: [string, string][] = [
  ['하루가 즐거웠는지, 내 방..', C1], ['왜 돼지?????????????', C1], ['하다 말았지만 뭐', C2], ['그럭저럭 이해', C1], ['애매하게 이해가 안 되는 ..', C2],
  ['으엉 ㅋㅋㅋㅋ 갈 길이 멀다', C2], ['이해 완료', C3], ['너무너무 맛있어. 밥도 2공..', C3], ['구냥 그럭저럭 이해함', C1], ['으어어 넘 아쉬운 내 영어 ..', C2],
  ['남 모를 열정, 돈 모으는 방..', C2], ['소통이 안 되니까 답답하긴..', C2], ['익숙해!', C1], ['지금 하는 일, 내가 한 큰 ..', C1],
];
const P = '#ffbeb2';
const R = '#ae123a';
const hates: [string, string, string][] = [
  ['애매한 완벽주의자라 문제다. ..', 'Work', P], ['이제 절대 저녁 늦게 먹지 말..', 'Envir..', R], ['솔직히 하나도 이해 못함 ㅋㅋ..', 'Studi..', P], ['저녁을 늦게 먹으니 또 술을 ..', 'Envir..', P],
  ['StackTrace하느라 강의 하나도..', 'Studi..', P], ['내 입맛엔 안 맞다', 'Envir..', P], ['일찍 좀 자자', 'Recre..', P], ['ㅋㅋㅋ아 하나도 모르겠다', 'Studi..', P],
  ['오늘만 술 먹고 진짜 먹지 말자', 'Envir..', R], ['술은 그래도 끊자 진짜', 'Envir..', P],
];

const SortIcon = ({ m }: { m: string }) => (
  <svg className={'h-[11px] w-[11px] ' + m} viewBox="0 0 11 11" stroke="#555" strokeWidth="2"><path d="M0 1.500h11M0 5.500h7M0 9.500h3.500" /></svg>
);

function Likes() {
  return (
    <div className="flex h-[304px] w-[252px]">
      <div className="flex w-[223px] flex-col overflow-hidden border-b border-[#cacaca] text-[14px]">
        <div className="flex h-[21px] shrink-0 border-b border-[#cacaca] leading-[22px] text-[#333]">
          <div className="flex w-[174px] items-center pl-[6px] pt-[2px]"><K t="Reason Of Rating" c="flex-1" /><SortIcon m="mr-[21px]" /></div>
          <div className="flex w-[42px] items-center pt-[2px]"><K t="T.." /><SortIcon m="ml-[3px]" /></div>
          <div className="w-[7px] border-x border-[#cacaca]" />
        </div>
        {likes.map(([t, c], i) => (
          <div key={i} className="flex h-[20px] shrink-0 border-b border-[#cacaca] leading-[17px]">
            <div className="w-[174px] overflow-hidden pl-[6px] text-[#333]"><K t={t} /></div>
            <div className="w-[42px] text-[#777]"><K t="Studies" /></div>
            <div className="flex-1 border-l border-[#cacaca]" style={{ background: c }} />
          </div>
        ))}
        <div className="flex h-[20px] shrink-0"><div className="ml-[216px] flex-1 bg-[#2a5783]" /></div>
      </div>
      <div className="ml-auto mt-[20px] w-[20px] bg-[#f0f0f0] pl-[8px] pt-[21px]"><div className="h-[82px] w-[3px] rounded bg-[#868686]" /></div>
      <div className="w-[8px]" />
    </div>
  );
}

function Hates() {
  return (
    <div className="w-[244px] text-[14px]">
      <div className="flex h-[21px] border-b border-[#cacaca] leading-[21px] text-[#333]">
        <div className="w-[194px] pl-[6px]"><K t="Reason Of Rating" /></div>
        <div className="w-[38px]"><K t="Task .." /></div>
        <div className="flex-1 border-x border-[#cacaca]" />
      </div>
      {hates.map(([t, k, c]) => (
        <div key={t} className="flex h-[20px] border-b border-[#cacaca] leading-[17px]">
          <div className="w-[194px] overflow-hidden pl-[6px] text-[#333]"><K t={t} /></div>
          <div className="w-[38px] overflow-hidden text-[#777]"><K t={k} /></div>
          <div className="flex-1 border-x border-[#cacaca]" style={{ background: c }} />
        </div>
      ))}
    </div>
  );
}

function Bubbles() {
  return (
    <svg className="block h-[304px] w-[240px]" viewBox="1287 760 240 304">
      <circle cx="1432" cy="834" r="74" fill={YELLOW} /><circle cx="1345.700" cy="911" r="41.600" fill={BLUE} /><circle cx="1398" cy="911" r="10.500" fill={TEAL} />
      <circle cx="1444" cy="918" r="11" fill={PURPLE} /><circle cx="1413" cy="961.500" r="42.600" fill={GREEN} />
      <g fontSize="12.500" textAnchor="middle" className={'[font-family:"Open_Sans"]'}>
        <text x="1433" y="831" fill="#111">Studies</text><text x="1433" y="848" fill="#111">59.3%</text>
        <text x="1414" y="959" fill="#fff">Recreation</text><text x="1414" y="976" fill="#fff">19.6%</text>
      </g>
    </svg>
  );
}

/* ---------- radar ---------- */

const CX = 1729.5;
const CY = 354.5;
const polar = (deg: number, r: number) => `${CX + r * Math.cos((deg * Math.PI) / 180)} ${CY - r * Math.sin((deg * Math.PI) / 180)}`;
const spokes = [40, 80, 120, 160, 200, 240, 280, 320];
const wheel: [number, number][] = [[0, 83.5], [40, 16], [80, 15.5], [120, 16], [160, 36.6], [200, 88], [240, 14], [279.2, 152.5], [320, 36]];
const wheelLabels: [number, number, string][] = [[1761, 214, '경제'], [1845, 262, '가족'], [1879, 353, '환경'], [1841, 444, '일'], [1761.5, 492.5, '공부'], [1650.5, 476, '사랑'], [1588, 401, '여가'], [1588, 305, '건강'], [1650.5, 231, '친구']];

function Radar() {
  return (
    <svg className="block h-[315px] w-[373px]" viewBox="1534 197 373 315" fill="none">
      {[26, 52, 78, 104].map((r) => <circle key={r} cx={CX} cy={CY} r={r} stroke="#d2d2d2" strokeWidth="1.200" strokeDasharray="2 0.600" />)}
      {spokes.map((a) => <path key={a} d={`M${CX} ${CY}L${polar(a, 130.600)}`} stroke="#cfcfcf" strokeWidth="1.300" />)}
      <path d={'M' + wheel.map(([a, r]) => polar(a, r)).join('L') + 'Z'} fill="#8fb2d2" fillOpacity="0.580" />
      <path d="M1588 355h281M1730.500 198v314" stroke="#a9a9a9" strokeDasharray="3 1.500" />
      <path d={`M${CX} ${CY}h130`} stroke="#bbb" />
      <circle cx={CX} cy={CY} r="130.600" stroke="#7f7f7f" strokeWidth="1.400" />
      <g fontSize="8.500" textAnchor="middle" fill="#333" className={HANGUL}>
        {wheelLabels.map(([x, y, t]) => <text key={t} x={x} y={y + 3}>{t}</text>)}
      </g>
      <g fontSize="7.500" textAnchor="middle" fill="#888" className={'[font-family:"Open_Sans"]'}>
        {[[1760, 20], [1785.5, 40], [1811.5, 60], [1838, 80], [1865, 100]].map(([x, v]) => <text key={v} x={x} y="353">{v}</text>)}
      </g>
    </svg>
  );
}

/* ---------- notes ---------- */

function Note({ title, lines, h, thumb, top }: { title: string; lines: string[]; h: string; thumb: string; top: string }) {
  return (
    <section>
      <div className="flex h-[49px] items-center pb-[2px] pl-[5px] text-[21.300px] font-bold text-[#333]"><K t={title} b /></div>
      <div className={'flex ' + h}>
        <div className="w-[352px] overflow-hidden border-y border-[#cacaca] pl-[6px] text-[14px] leading-[17.330px] text-[#333]">
          <div className={top}>
            {lines.map((l, i) => <div key={i} className="h-[17.330px]"><K t={l} /></div>)}
          </div>
        </div>
        <div className="w-[20px] bg-[#f0f0f0] pl-[8px] pt-[21px]"><div className={'w-[3px] rounded bg-[#868686] ' + thumb} /></div>
      </div>
      <div className="mt-[2px] h-[20px] w-[351px] bg-[#f0f0f0] pl-[21px] pt-[8px]"><div className="h-[3px] w-[295px] rounded bg-[#868686]" /></div>
    </section>
  );
}

/* ---------- bottom tabs ---------- */

const GridIc = () => <svg className="mr-[5px] h-[12px] w-[12px]" viewBox="0 0 12 12" fill="none" stroke="#555"><path d="M.5.5h11v11H.5zM.5 6h11M6 .5v11" /></svg>;

const tabs: [string, string, boolean?][] = [
  ['활동 Tracking', 'w-[110px]'], ['활동 반경 및 소요 시간', 'w-[171px]'], ['일별 만족도 평균', 'w-[131px]'], ['좋아요', 'w-[60px]'], ['싫어요', 'w-[60px]'], ['시간 점유율', 'w-[95px]'],
  ['잼민이 영양사', 'w-[110px]'], ['잼민이 비서', 'w-[95px]'], ['Life Wheel (7 days)', 'w-[153px]'], ['프로젝트', 'w-[93px]', true], ['프로젝트 간트 차트', 'w-[146px]'], ['ToDo별 진행 현황', 'w-[138px]'],
];

const newIcons = ['M12 7V.500H.500v12H7M3.500 9v1.500M6 4v6M8.500 6v3', 'M7 12.500H.500V.500h11.500V7M.500 6.500h10M6.200.500v12', 'M1 1.500l5 1.500 5.500-2V7M1 1.500V12l5-1M6 3v8'];

function Footer() {
  const sep = 'border-r border-[#c4c4c4] ';
  return (
    <footer className="shrink-0 text-[16px] text-[#555]">
      <div className="flex h-[38px] border-y border-[#c8c8c8] bg-[#e6e6e6] leading-[36px]">
        <div className={sep + 'flex w-[163px] items-center pl-[11px]'}>
          <svg className="mr-[7px] h-[12px] w-[8px]" viewBox="0 0 8 12" fill="none" stroke="#555"><ellipse cx="4" cy="2.300" rx="3.500" ry="1.800" /><path d="M.5 2.300v7.500c0 2.200 7 2.200 7 0V2.300" /></svg>
          <K t="데이터 원본" />
        </div>
        <div className={sep + 'flex w-[99px] items-center bg-[#fafafa] pl-[9px]'}><GridIc /><K t="나의 일상" /></div>
        {tabs.map(([t, w, g]) => <div key={t} className={sep + 'flex items-center whitespace-nowrap pl-[6px] ' + w}>{g && <GridIc />}<K t={t} big /></div>)}
        {newIcons.map((d) => (
          <div key={d} className={sep + 'flex w-[32px] items-center justify-center'}>
            <svg className="h-[16px] w-[16px]" viewBox="0 0 16 16" fill="none" stroke="#666"><path d={d} /><path d={plus(11.5, 11.5, 4)} strokeWidth="2" /></svg>
          </div>
        ))}
      </div>
      <div className="flex h-[25px] bg-[#ebebeb]">
        <div className={sep + 'w-[1502px]'} /><div className={sep + 'w-[157px]'} /><div className={sep + 'w-[32px]'} /><div className={sep + 'w-[32px]'} /><div className={sep + 'w-[57px]'} />
        <div className={sep + 'flex w-[71px] items-center justify-center'}>
          <svg className="h-[9px] w-[56px]" viewBox="0 0 56 9" fill="#b5b5b5"><path d="M0 1h1.500v7H0zM6.500 1v7L2.500 4.500zM22 1v7l-4-3.500zM34 1v7l4-3.500zM49 1v7l4-3.500zM54 1h1.500v7H54z" /></svg>
        </div>
        <svg className="ml-[8px] mt-[7px] h-[12px] w-[56px]" viewBox="0 0 56 12" fill="#b8b8b8">
          <path d="M0 0h3v3H0zM4 0h3v3H4zM8 0h3v3H8zM0 4h3v3H0zM4 4h3v3H4zM8 4h3v3H8zM0 8h3v3H0zM4 8h3v3H4zM8 8h3v3H8zM22 0h11v7H22zM22 8h3v3h-3zM26 8h3v3h-3zM30 8h3v3h-3z" />
          <path d="M44 0h11v11H44z" fill="#666" />
        </svg>
      </div>
    </footer>
  );
}

const legend: [string, string][] = [['Environment', BLUE], ['Health', TEAL], ['Recreation', GREEN], ['Studies', YELLOW], ['Work', PURPLE]];
const titleCls = 'h-[50px] text-[21.300px] font-bold leading-[49px] text-[#333] ';

export default function App() {
  return (
    <div className="flex h-[1140px] w-[1920px] flex-col overflow-hidden bg-white">
      <Header />
      <Toolbar />
      <div className="flex h-[922px] shrink-0">
        <Side />
        <main className="flex flex-1 pl-[12px]">
          <div className="flex w-[1253px] shrink-0 flex-col">
            <div className="flex h-[46px] items-center pb-[2px] text-[14px] text-[#4a4a4a]">
              <div className="w-[75px]"><K t="Task Type" /></div>
              {legend.map(([t, c]) => (
                <div key={t} className="flex w-[120px] items-center"><div className="mr-[5px] h-[14px] w-[14px]" style={{ background: c }} /><K t={t} /></div>
              ))}
            </div>
            <Gantt />
            <div className="flex">
              <div className="w-[256px]"><div className={titleCls + 'pl-[4px]'}><K t="활동 반경 및 소요 시간" b /></div><SiteMap /></div>
              <div className="w-[249px]"><div className="h-[50px] pl-[6px] text-[21.300px] font-bold leading-[60px] text-[#333]"><K t="일별 만족도 평균" b /></div><LineChart /></div>
              <div className="w-[252px]"><div className={titleCls + 'pl-[4px]'}><K t="좋아요" b /></div><Likes /></div>
              <div className="w-[256px]"><div className={titleCls + 'pl-[4px]'}><K t="싫어요" b /></div><Hates /></div>
              <div className="w-[240px]"><div className={titleCls}><K t="시간 점유율" b /></div><Bubbles /></div>
            </div>
          </div>
          <div className="ml-[7px] w-[373px]">
            <div className={'h-[42px] text-[19px] font-bold leading-[55px] text-black [font-family:"Open_Sans"]'}>Life Wheel</div>
            <Radar />
            <div className="-mt-[12px] pl-px">
              <Note title="잼민이 비서" h="h-[243px]" thumb="h-[130px]" top="-mt-px" lines={['작성에 대한 만족도가 낮았던 부분은 개선이 필요해요.', '', '복습이 필요하다고 언급된 부분을 상기시켜 드립니다.  특히', '3월 24일 MyBatis와 27일 JPA 학습은 복습이 중요합니다.', '', '건강은 숙취로 인해 운동이 제대로 되지 않았어요.  금주를', '고려해 보세요.', '', '여가는 음악 축제 참석으로 만족도가 높았지만, 술 소비량을', '줄여야 합니다.', '', '가족, 친구, 사랑, 재정 영역의 데이터가 부족해요.  다음', '주부터는 이 부분에 대한 기록을 더욱 신경 써주세요.']} />
              <Note title="잼민이 영양사" h="h-[180px]" thumb="h-[123px]" top="pt-px" lines={['이번 주 식단은 불규칙적입니다.', '', '패스트푸드 섭취가 많습니다.', '', '채소 섭취가 부족합니다.', '', '균형 잡힌 식사를 위해 채소와 과일을 더 섭취하세요.', '', '매일 아침 식사를 챙겨 드세요.', '', '단백질 많은 식품 섭취를 해 보세요.']} />
            </div>
          </div>
        </main>
      </div>
      <Footer />
    </div>
  );
}
